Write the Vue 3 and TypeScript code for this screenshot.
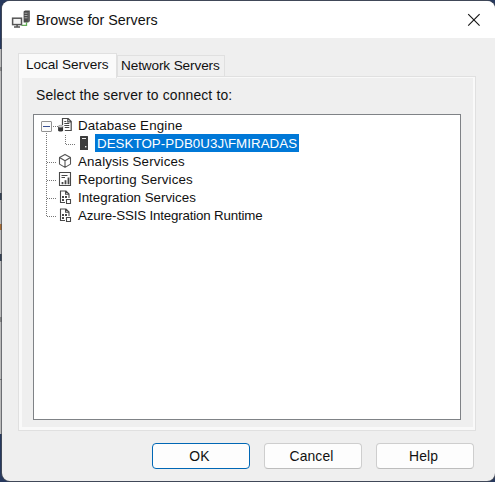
<script setup lang="ts">
import { ref } from 'vue'

interface Service {
  name: string
  icon: 'cube' | 'report' | 'package'
}

const tab = ref<'local' | 'network'>('local')
const services: Service[] = [
  { name: 'Analysis Services', icon: 'cube' },
  { name: 'Reporting Services', icon: 'report' },
  { name: 'Integration Services', icon: 'package' },
  { name: 'Azure-SSIS Integration Runtime', icon: 'package' },
]
</script>

<template>
  <div class="desktop">
    <div class="backdrop" aria-hidden="true">
      <i class="mark m1"></i><i class="mark m2"></i><i class="mark m3"></i><i class="mark m4"></i><i class="mark m5"></i><i class="mark m6"></i>
    </div>
    <main class="window">
      <header class="titlebar">
        <svg class="app-icon" width="20" height="20" viewBox="0 0 20 20">
          <path d="M12.6 1.6 14 .4h4.8v10.9L17.2 12.5h-4.6z" fill="#4a4a4a" />
          <path d="M13.5 3.2h3M13.5 5.5h3M13.5 7.8h3" stroke="#b5b5b5" stroke-width=".9" />
          <path d="M17.3 2v10" stroke="#777" stroke-width=".6" />
          <path d="M10.5 15.3H15.5v-3" fill="none" stroke="#63ad58" stroke-width="1.3" />
          <rect x="1.6" y="8.2" width="8.9" height="6.4" fill="#f5f5f5" stroke="#555" stroke-width="1.5" />
          <path d="M6.1 14.5v2.5M3 17.1h6" stroke="#555" stroke-width="1.5" />
        </svg>
        <h1>Browse for Servers</h1>
        <button class="close" aria-label="Close">
          <svg width="14" height="14" viewBox="0 0 14 14"><path d="M1.2 1.2l11.4 11.4M12.6 1.2 1.2 12.6" stroke="#161616" stroke-width="1.15" /></svg>
        </button>
      </header>

      <nav class="tabs">
        <button class="tab local" :class="{ active: tab === 'local' }" @click="tab = 'local'">Local Servers</button>
        <button class="tab network" :class="{ active: tab === 'network' }" @click="tab = 'network'">Network Servers</button>
      </nav>

      <section class="panel">
        <p class="prompt">Select the server to connect to:</p>
        <div class="tree">
          <div class="row">
            <svg class="branch" width="18" height="18" viewBox="0 0 18 18">
              <path d="M6.5 16V18M13 9.5h5" stroke="#777" stroke-dasharray="1 1" />
              <rect x="1.5" y="4.5" width="10" height="10" rx=".5" fill="#fafafa" stroke="#929292" />
              <path d="M3 9.5h7" stroke="#364d91" />
            </svg>
            <svg class="icon" width="16" height="18" viewBox="0 0 16 18">
              <path d="M4.5 8V1.5h5.7l3 3v9H6.8M9.8 1.5v3.3h3.4" fill="#fff" stroke="#484848" stroke-width="1.2" />
              <path d="M6.3 4.5h2M6.3 6.5h5M6.3 8.5h5M6.8 10.5h4.5" stroke="#484848" />
              <path d="M.1 9.8v3.7c0 1.3 5 1.3 5 0V9.8z" fill="#333" />
              <ellipse cx="2.6" cy="9.4" rx="2.4" ry="1.1" fill="#d5d5d5" stroke="#777" stroke-width=".5" />
            </svg>
            <span class="label engine">Database Engine</span>
          </div>
          <div class="row">
            <svg width="36" height="18" viewBox="0 0 36 18"><path d="M6.5 0v18M25.5 0v9M26 9.5H36" fill="none" stroke="#777" stroke-dasharray="1 1" /></svg>
            <svg width="19" height="18" viewBox="0 0 19 18">
              <rect x="4" y="1" width="8" height="14" rx=".5" fill="#3d3d3d" />
              <path d="M6 3.5h4" stroke="#eee" /><rect x="9" y="11" width="1.4" height="1.4" fill="#eee" />
            </svg>
            <span class="label selected">DESKTOP-PDB0U3J\FMIRADAS</span>
          </div>
          <div v-for="(service, index) in services" :key="service.name" class="row">
            <svg class="branch" width="18" height="18" viewBox="0 0 18 18"><path :d="index === services.length - 1 ? 'M6.5 0v9M7 9.5H17' : 'M6.5 0v18M7 9.5H17'" fill="none" stroke="#777" stroke-dasharray="1 1" /></svg>
            <svg class="icon" width="16" height="18" viewBox="0 0 16 18">
              <g v-if="service.icon === 'cube'" fill="none" stroke="#555" stroke-width="1.1" stroke-linejoin="round"><path d="m7 1.4 5.5 3.1v6.6L7 14.4l-5.5-3.3V4.5zM1.5 4.5 7 7.8l5.5-3.3M7 7.8v6.6" /></g>
              <g v-else-if="service.icon === 'report'"><path d="M1.5 1.5h11v13h-11z" fill="#fff" stroke="#484848" stroke-width="1.1" /><path d="M3.5 4.5h6M3.5 6.5h3.5" stroke="#484848" /><path d="M4.5 13.3v-2.3M7.5 13.3v-4M10.5 13.3V6.5" stroke="#484848" stroke-width="1.8" /></g>
              <g v-else fill="#fff" stroke="#484848" stroke-width="1.1"><path d="M7 13.5H2.5v-11.5h5.5l3 3v4M7.6 2v3.3H11" /><path d="M4 7h2v2H4zM7 7h2v2H7zM4 10h2v2H4z" fill="#484848" stroke="none" /><path d="M8.5 10.5h4v4h-4z" /></g>
            </svg>
            <span class="label" :class="'service-' + index">{{ service.name }}</span>
          </div>
        </div>
      </section>

      <footer class="actions">
        <button class="primary">OK</button>
        <button>Cancel</button>
        <button>Help</button>
      </footer>
    </main>
  </div>
</template>

<style>
body { overflow: hidden; }
</style>

<style scoped>
* { box-sizing: border-box; }
.desktop { width: 495px; height: 482px; position: relative; background: #27395e; padding: 1px 0 1px 2px; font: 13.33px/18px "Liberation Sans", Arial, sans-serif; color: #111; }
.backdrop { position: absolute; left: 0; top: 49px; width: 3px; height: 385px; background: #bababa; overflow: hidden; }
.mark { position: absolute; left: 0; width: 2px; height: 7px; background: #354153; }
.m1 { top: 18px; height: 4px; background: #888; }
.m2 { top: 144px; }
.m3 { top: 175px; height: 6px; background: #a86c32; }
.m4 { top: 205px; }
.m5 { top: 268px; height: 5px; background: #858585; }
.m6 { top: 330px; height: 1px; background: #777; }
.window { position: relative; width: 493px; height: 480px; background: #efefef; border-radius: 8px; overflow: hidden; box-shadow: 0 0 0 1px rgba(75, 78, 86, .7); }
.titlebar { height: 37px; background: #fff; display: flex; align-items: center; padding-left: 9px; }
.app-icon { margin-right: 5px; }
h1 { font: 14.3px/20px "Liberation Sans", Arial, sans-serif; margin: 1px 0 0; white-space: nowrap; }
button { appearance: none; font-family: inherit; color: inherit; margin: 0; }
.close { width: 14px; height: 14px; margin-left: auto; margin-right: 14px; border: 0; padding: 0; background: none; }
.close svg { display: block; }
.tabs { display: flex; align-items: flex-end; height: 38px; padding-left: 16px; }
.tab { height: 21px; padding: 0 0 0 3px; text-align: left; border: 1px solid #e0e0e0; border-bottom: 0; background: #f0f0f0; font-size: 13.6px; line-height: 20px; white-space: nowrap; }
.tab.active { position: relative; z-index: 1; height: 25px; margin-bottom: -2px; background: #fafafa; padding-left: 7px; padding-bottom: 3px; }
.local { width: 99px; letter-spacing: -.05px; }
.network { width: 108px; letter-spacing: -.12px; }
.panel { width: 458px; height: 355px; margin-left: 16px; border: 1px solid #e0e0e0; box-shadow: inset 3px 1px #f9f9f9, inset -2px -3px #f9f9f9; padding: 8px 13px 9px 14px; }
.prompt { margin: 0 0 9px 3px; line-height: 20px; font-size: 13.9px; letter-spacing: .15px; white-space: nowrap; }
.tree { width: 428px; height: 306px; border: 1px solid #7f8286; background: #fff; padding: 2px 0 0 6px; }
.row { display: flex; height: 18px; align-items: flex-start; }
.row svg { display: block; flex: none; }
.icon { margin-right: 2px; }
.label { height: 18px; margin-top: -1px; padding: 0 2px; white-space: nowrap; line-height: 19px; }
.engine { letter-spacing: .15px; }
.service-0 { letter-spacing: .14px; }
.service-1 { letter-spacing: .12px; }
.service-3 { letter-spacing: -.17px; }
.selected { background: #0078d7; color: #fff; letter-spacing: .05px; }
.actions { display: flex; gap: 14px; padding: 12px 0 0 150px; }
.actions button { width: 98px; height: 26px; border: 1px solid #cecece; border-bottom-color: #bdbdbd; border-radius: 4px; background: #fdfdfd; font-size: 13.9px; letter-spacing: .1px; line-height: 22px; padding: 0 3px 0 0; text-align: center; }
.actions .primary { border-color: #0067b5; }
</style>
